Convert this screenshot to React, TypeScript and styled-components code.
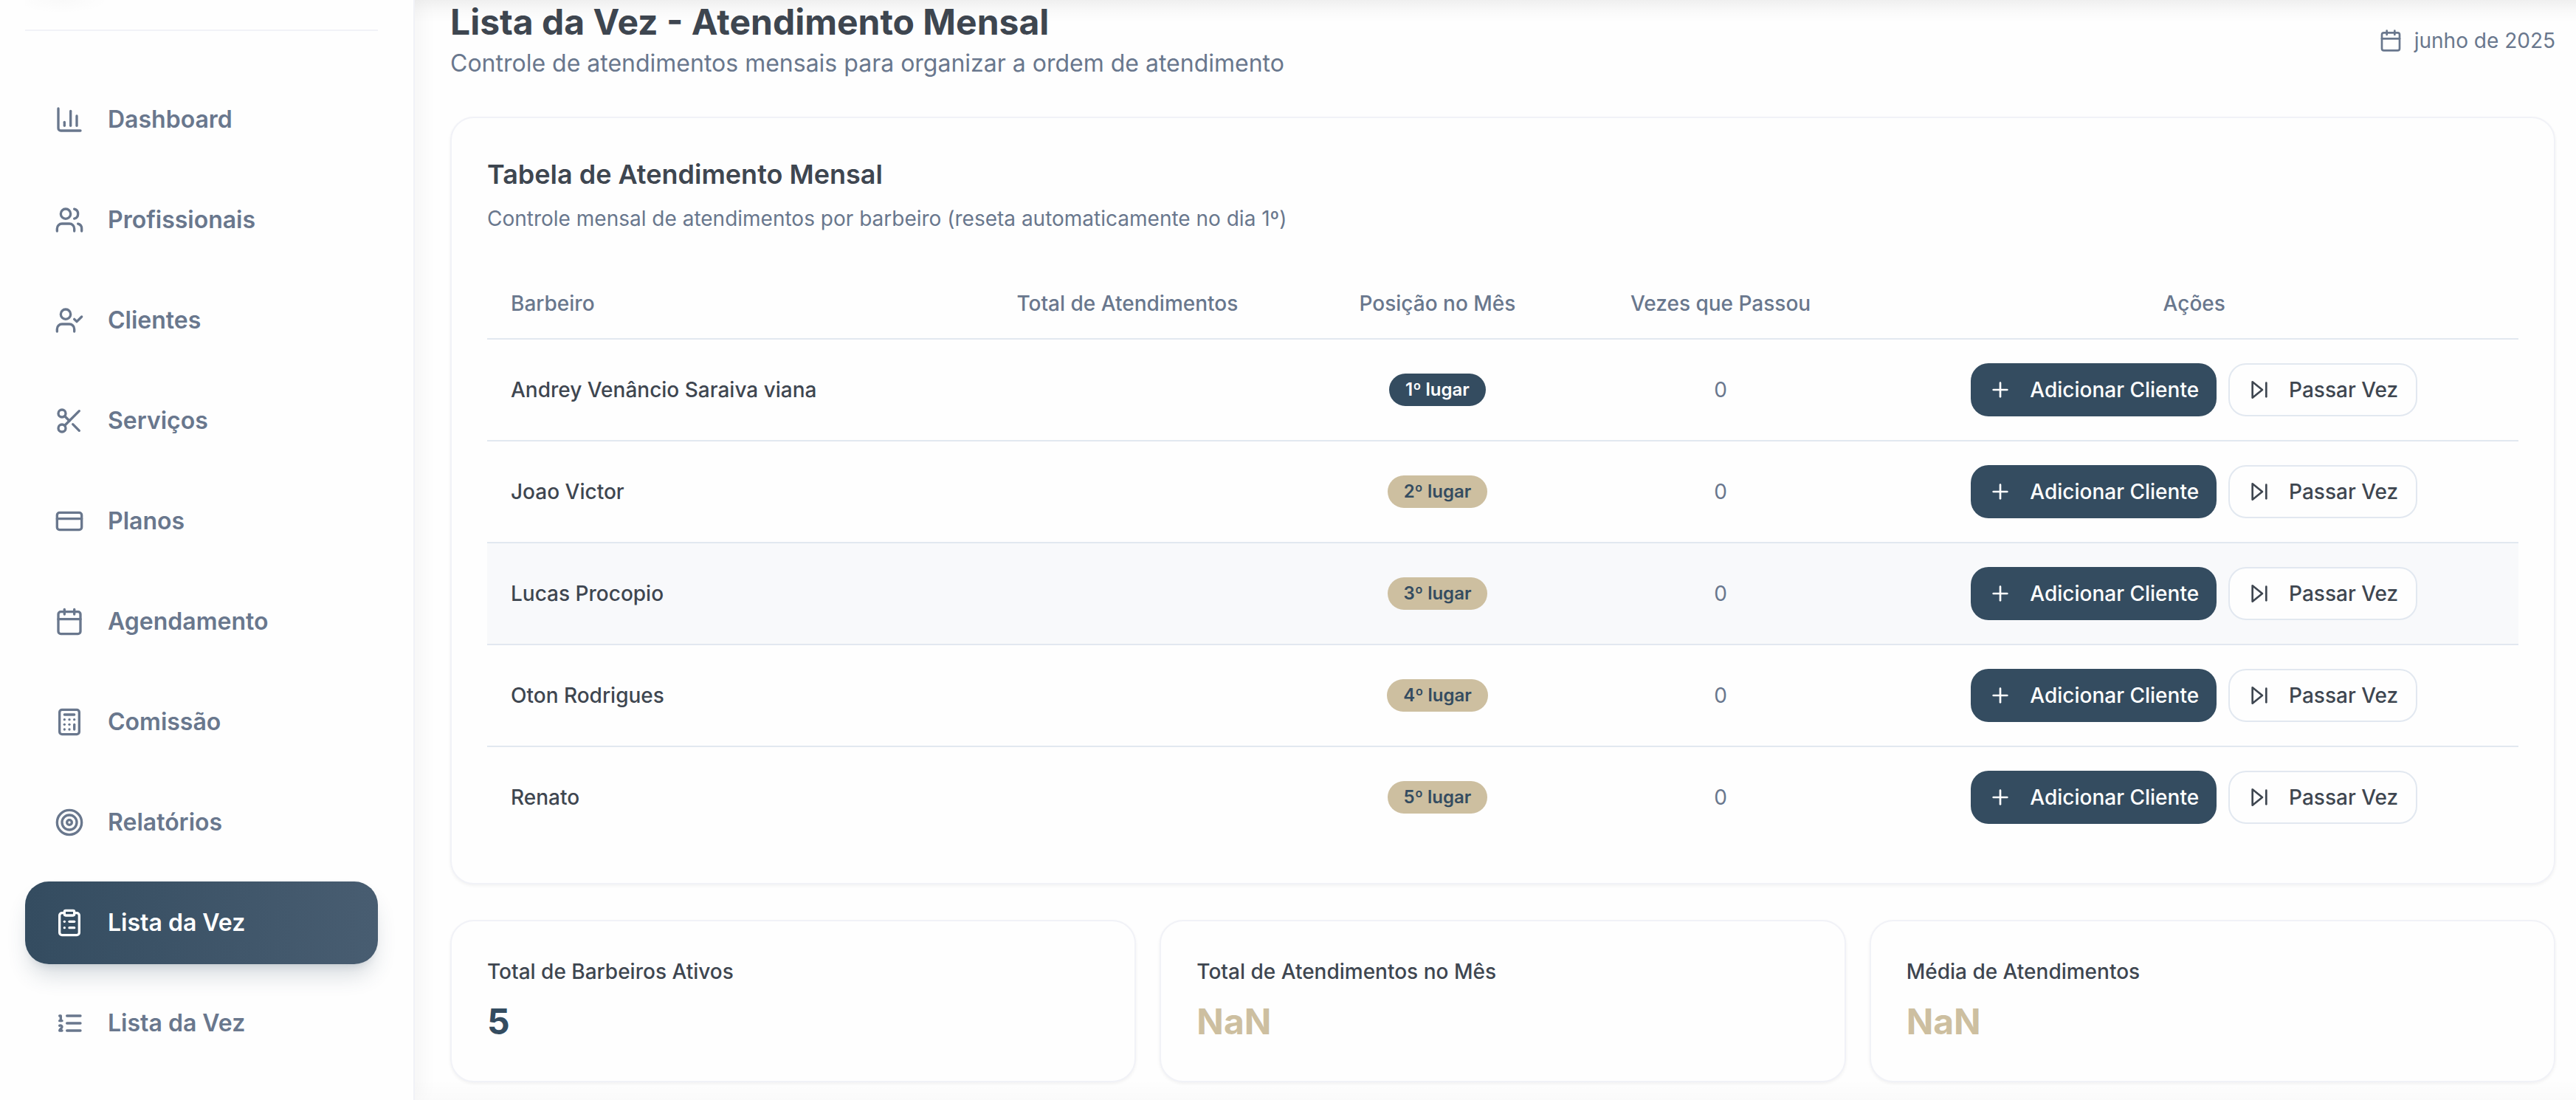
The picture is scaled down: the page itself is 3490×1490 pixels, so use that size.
import React from "react";
import styled, { createGlobalStyle } from "styled-components";
import {
  Calculator,
  Calendar,
  ClipboardList,
  CreditCard,
  Plus,
  Scissors,
  Target,
  UserCheck,
  Users,
} from "lucide-react";

const color = {
  page: "#fefefe",
  primary: "#344c60",
  primaryEnd: "#485d71",
  sand: "#cdbfa0",
  ink: "#3e4650",
  muted: "#69778d",
  line: "#e2e8f0",
  soft: "#f1f2f7",
  hover: "#f8f9fb",
};

const GlobalStyle = createGlobalStyle`
  *, *::before, *::after { box-sizing: border-box; }
  body {
    margin: 0;
    background: ${color.page};
    color: ${color.ink};
    font-family: Inter, "Liberation Sans", sans-serif;
    font-size: 28px;
    line-height: 40px;
    -webkit-font-smoothing: antialiased;
  }
  h1, h2, h3, p { margin: 0; }
`;

const Layout = styled.div`
  display: flex;
  min-height: 100vh;
  overflow: hidden;
`;

const Sidebar = styled.aside`
  position: relative;
  z-index: 1;
  flex: none;
  width: 562px;
  padding: 0 48px 0 34px;
  border-right: 2px solid ${color.soft};
  background: ${color.page};
  box-shadow: 8px 0 24px rgba(0, 0, 0, 0.04);
`;

const Brand = styled.div`
  height: 42px;
  margin-bottom: 64px;
  border-bottom: 2px solid ${color.soft};
  background: radial-gradient(64px 18px at 50px 0, rgba(0, 0, 0, 0.02), rgba(0, 0, 0, 0)) no-repeat;
`;

const Nav = styled.nav`
  display: flex;
  flex-direction: column;
  gap: 24px;
`;

const NavLink = styled.a<{ $active?: boolean }>`
  display: flex;
  align-items: center;
  gap: 32px;
  height: 112px;
  padding: 0 40px;
  border-radius: 32px;
  font-size: 32px;
  line-height: 48px;
  font-weight: 600;
  text-decoration: none;
  color: ${(p) => (p.$active ? "#ffffff" : color.muted)};
  background: ${(p) =>
    p.$active ? `linear-gradient(to right, ${color.primary}, ${color.primaryEnd})` : "none"};
  box-shadow: ${(p) =>
    p.$active
      ? "0 20px 30px -6px rgba(52, 76, 96, 0.2), 0 8px 12px -8px rgba(52, 76, 96, 0.2)"
      : "none"};
`;

const Main = styled.main`
  flex: 1;
  min-width: 0;
  display: flex;
  flex-direction: column;
  gap: 48px;
  padding: 0 28px 24px 48px;
  background: linear-gradient(to top, rgba(0, 0, 0, 0.014), rgba(0, 0, 0, 0) 28px);
`;

const TopShade = styled.div`
  position: absolute;
  top: 0;
  left: 0;
  right: 0;
  height: 30px;
  pointer-events: none;
  background: linear-gradient(rgba(0, 0, 0, 0.06), rgba(0, 0, 0, 0.02) 50%, rgba(0, 0, 0, 0));
`;

const PageHeader = styled.header`
  display: flex;
  align-items: center;
  justify-content: space-between;
`;

const PageTitle = styled.h1`
  font-size: 48px;
  line-height: 60px;
  font-weight: 700;
`;

const PageSubtitle = styled.p`
  margin-top: 2px;
  font-size: 32px;
  line-height: 48px;
  color: ${color.muted};
`;

const Period = styled.div`
  display: flex;
  align-items: center;
  gap: 16px;
  color: ${color.muted};
`;

const Card = styled.section`
  padding: 48px;
  border: 2px solid ${color.soft};
  border-radius: 32px;
  background: ${color.page};
  box-shadow: 0 2px 4px rgba(0, 0, 0, 0.05);
`;

const CardHeader = styled.div`
  display: flex;
  flex-direction: column;
  gap: 12px;
  padding-bottom: 48px;
`;

const CardTitle = styled.h2`
  font-size: 36px;
  line-height: 56px;
  font-weight: 600;
`;

const CardText = styled.p`
  color: ${color.muted};
`;

const Table = styled.table`
  width: 100%;
  border-collapse: separate;
  border-spacing: 0;
`;

const HeadCell = styled.th<{ $start?: boolean }>`
  height: 96px;
  padding: 0 32px;
  border-bottom: 2px solid ${color.line};
  font-weight: 500;
  text-align: ${(p) => (p.$start ? "left" : "center")};
  white-space: nowrap;
  color: ${color.muted};
`;

const Row = styled.tr<{ $highlight?: boolean }>`
  background: ${(p) => (p.$highlight ? color.hover : "transparent")};

  &:not(:last-child) > td {
    border-bottom: 2px solid ${color.line};
  }
`;

const Cell = styled.td<{ $name?: boolean }>`
  padding: 32px;
  vertical-align: middle;
  white-space: nowrap;
  text-align: ${(p) => (p.$name ? "left" : "center")};
  font-weight: ${(p) => (p.$name ? 500 : 400)};
  color: ${(p) => (p.$name ? color.ink : color.muted)};
`;

const Badge = styled.span<{ $first?: boolean }>`
  display: inline-block;
  vertical-align: middle;
  padding: 6px 22px;
  border-radius: 22px;
  font-size: 24px;
  line-height: 32px;
  font-weight: 600;
  color: ${(p) => (p.$first ? "#ffffff" : color.primary)};
  background: ${(p) => (p.$first ? color.primary : color.sand)};
`;

const Actions = styled.div`
  display: flex;
  justify-content: center;
  gap: 16px;
`;

const Button = styled.button<{ $outline?: boolean }>`
  display: inline-flex;
  align-items: center;
  gap: 24px;
  height: 72px;
  padding: 0 24px;
  border: ${(p) => (p.$outline ? `2px solid ${color.line}` : "none")};
  border-radius: 24px;
  font: inherit;
  font-weight: 500;
  cursor: pointer;
  color: ${(p) => (p.$outline ? color.ink : "#ffffff")};
  background: ${(p) => (p.$outline ? color.page : color.primary)};
`;

const Stats = styled.div`
  display: grid;
  grid-template-columns: repeat(3, 1fr);
  gap: 32px;
`;

const StatCard = styled(Card)`
  display: flex;
  flex-direction: column;
  gap: 16px;
`;

const StatLabel = styled.h3`
  font-size: 28px;
  line-height: 40px;
  font-weight: 500;
`;

const StatValue = styled.p<{ $accent?: boolean }>`
  font-size: 48px;
  line-height: 64px;
  font-weight: 700;
  color: ${(p) => (p.$accent ? color.sand : color.primary)};
`;

type IconProps = { size?: number; children?: React.ReactNode };

function StrokeIcon({ size = 24, children }: IconProps) {
  return (
    <svg
      width={size}
      height={size}
      viewBox="0 0 24 24"
      fill="none"
      stroke="currentColor"
      strokeWidth="2"
      strokeLinecap="round"
      strokeLinejoin="round"
      aria-hidden="true"
    >
      {children}
    </svg>
  );
}

function ChartIcon({ size }: IconProps) {
  return (
    <StrokeIcon size={size}>
      <path d="M3 3v16a2 2 0 0 0 2 2h16" />
      <path d="M18 17V9" />
      <path d="M13 17V5" />
      <path d="M8 17v-3" />
    </StrokeIcon>
  );
}

function OrderedListIcon({ size }: IconProps) {
  return (
    <StrokeIcon size={size}>
      <path d="M10 12h11" />
      <path d="M10 18h11" />
      <path d="M10 6h11" />
      <path d="M4 10h2" />
      <path d="M4 6h1v4" />
      <path d="M6 18H4c0-1 2-2 2-3s-1-1.5-2-1" />
    </StrokeIcon>
  );
}

function SkipIcon({ size }: IconProps) {
  return (
    <StrokeIcon size={size}>
      <polygon points="5 4 15 12 5 20 5 4" />
      <line x1="19" x2="19" y1="5" y2="19" />
    </StrokeIcon>
  );
}

const navigation = [
  { label: "Dashboard", icon: ChartIcon },
  { label: "Profissionais", icon: Users },
  { label: "Clientes", icon: UserCheck },
  { label: "Serviços", icon: Scissors },
  { label: "Planos", icon: CreditCard },
  { label: "Agendamento", icon: Calendar },
  { label: "Comissão", icon: Calculator },
  { label: "Relatórios", icon: Target },
  { label: "Lista da Vez", icon: ClipboardList, active: true },
  { label: "Lista da Vez", icon: OrderedListIcon },
];

const barbers = [
  "Andrey Venâncio Saraiva viana",
  "Joao Victor",
  "Lucas Procopio",
  "Oton Rodrigues",
  "Renato",
];

const stats = [
  { label: "Total de Barbeiros Ativos", value: "5" },
  { label: "Total de Atendimentos no Mês", value: "NaN", accent: true },
  { label: "Média de Atendimentos", value: "NaN", accent: true },
];

export default function App() {
  return (
    <Layout>
      <GlobalStyle />
      <Sidebar>
        <Brand />
        <Nav>
          {navigation.map(({ label, icon: Icon, active }, i) => (
            <NavLink key={i} href="#" $active={active} aria-current={active ? "page" : undefined}>
              <Icon size={40} />
              {label}
            </NavLink>
          ))}
        </Nav>
      </Sidebar>
      <Main>
        <TopShade />
        <PageHeader>
          <div>
            <PageTitle>Lista da Vez - Atendimento Mensal</PageTitle>
            <PageSubtitle>
              Controle de atendimentos mensais para organizar a ordem de atendimento
            </PageSubtitle>
          </div>
          <Period>
            <Calendar size={32} />
            <span>junho de 2025</span>
          </Period>
        </PageHeader>
        <Card>
          <CardHeader>
            <CardTitle>Tabela de Atendimento Mensal</CardTitle>
            <CardText>
              Controle mensal de atendimentos por barbeiro (reseta automaticamente no dia 1º)
            </CardText>
          </CardHeader>
          <Table>
            <thead>
              <tr>
                <HeadCell $start>Barbeiro</HeadCell>
                <HeadCell>Total de Atendimentos</HeadCell>
                <HeadCell>Posição no Mês</HeadCell>
                <HeadCell>Vezes que Passou</HeadCell>
                <HeadCell>Ações</HeadCell>
              </tr>
            </thead>
            <tbody>
              {barbers.map((name, i) => (
                <Row key={name} $highlight={i === 2}>
                  <Cell $name>{name}</Cell>
                  <Cell />
                  <Cell>
                    <Badge $first={i === 0}>{i + 1}º lugar</Badge>
                  </Cell>
                  <Cell>0</Cell>
                  <Cell>
                    <Actions>
                      <Button type="button">
                        <Plus size={32} />
                        Adicionar Cliente
                      </Button>
                      <Button type="button" $outline>
                        <SkipIcon size={32} />
                        Passar Vez
                      </Button>
                    </Actions>
                  </Cell>
                </Row>
              ))}
            </tbody>
          </Table>
        </Card>
        <Stats>
          {stats.map((stat) => (
            <StatCard key={stat.label}>
              <StatLabel>{stat.label}</StatLabel>
              <StatValue $accent={stat.accent}>{stat.value}</StatValue>
            </StatCard>
          ))}
        </Stats>
      </Main>
    </Layout>
  );
}
